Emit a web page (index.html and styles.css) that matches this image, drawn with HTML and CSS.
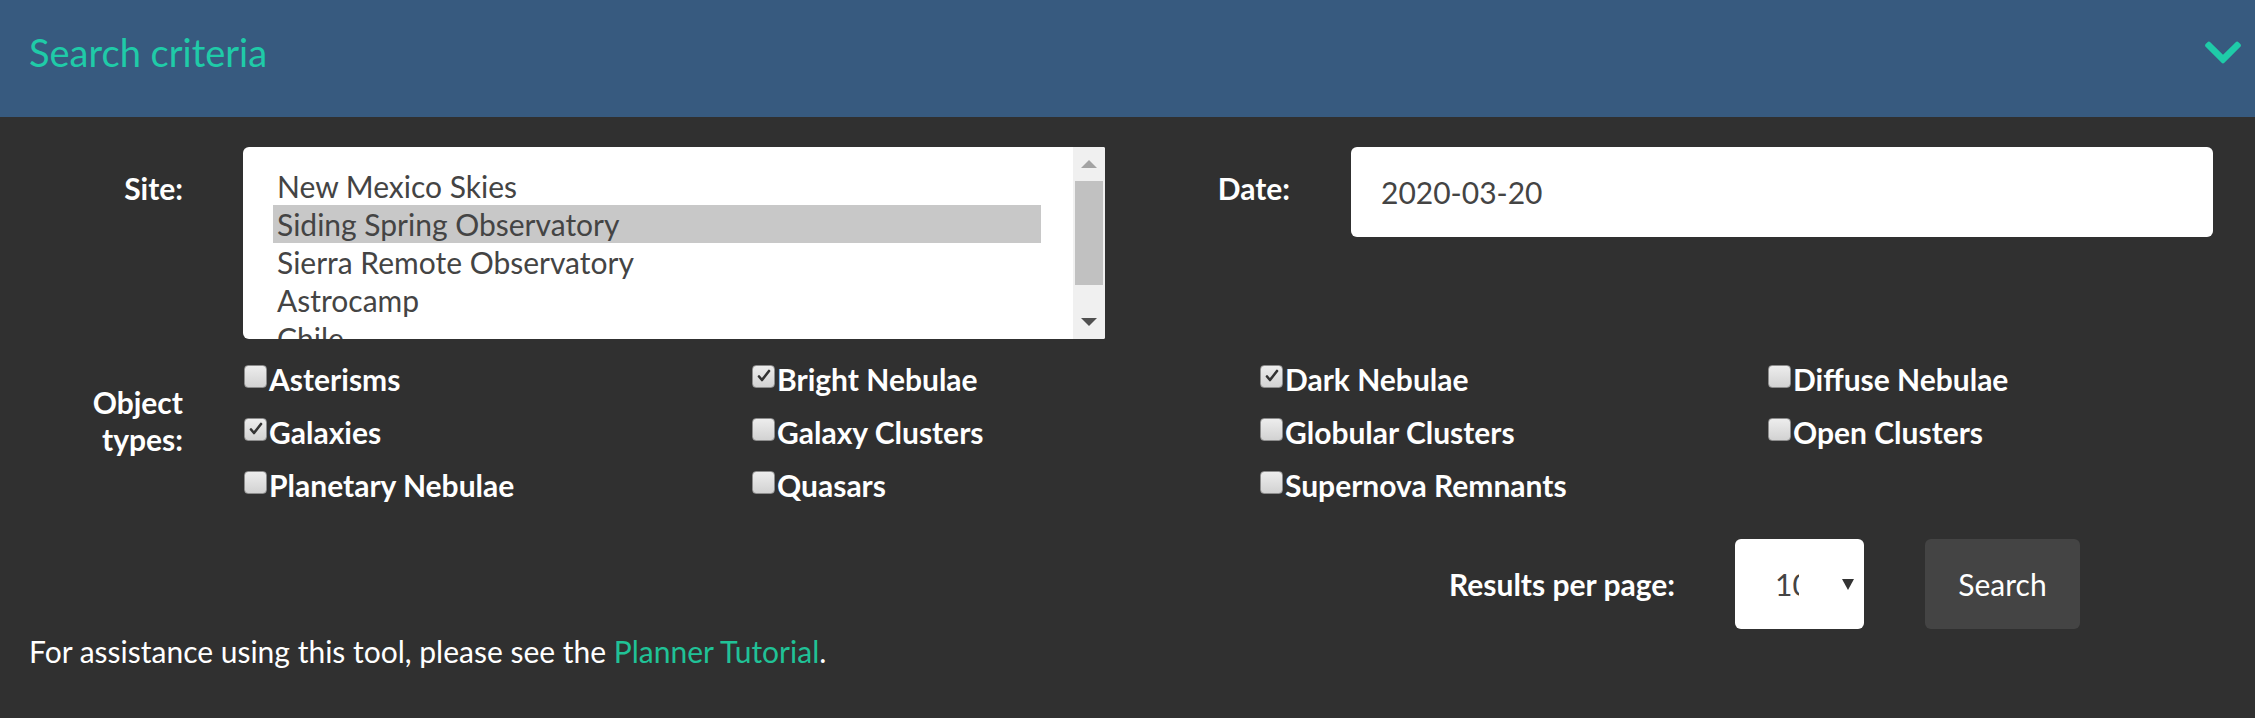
FILE: index.html
```html
<!DOCTYPE html>
<html lang="en">
<head>
<meta charset="utf-8">
<title>Search criteria</title>
<link rel="stylesheet" href="styles.css">
</head>
<body>
<section class="panel">
  <header class="panel-head">
    <h2 class="panel-title">Search criteria</h2>
    <svg class="chevron" viewBox="5 123 438 266" aria-hidden="true"><path d="M207.029 381.476L12.686 187.132c-9.373-9.373-9.373-24.569 0-33.941l22.667-22.667c9.357-9.357 24.522-9.375 33.901-.04L224 284.505l154.745-154.021c9.379-9.335 24.544-9.317 33.901.04l22.667 22.667c9.373 9.373 9.373 24.569 0 33.941L240.971 381.476c-9.373 9.372-24.569 9.372-33.942 0z"/></svg>
  </header>
  <div class="panel-body">
    <div class="row-fields">
      <div class="half">
        <label class="lbl">Site:</label>
        <div class="listbox">
          <ul class="options">
            <li class="opt">New Mexico Skies</li>
            <li class="opt opt-sel">Siding Spring Observatory</li>
            <li class="opt">Sierra Remote Observatory</li>
            <li class="opt">Astrocamp</li>
            <li class="opt">Chile</li>
          </ul>
          <div class="scrollbar">
            <div class="sb-btn"><svg class="sb-arrow sb-arrow-up" viewBox="0 0 16 8"><polygon points="8,0 16,8 0,8"/></svg></div>
            <div class="sb-thumb"></div>
            <div class="sb-track"></div>
            <div class="sb-btn"><svg class="sb-arrow sb-arrow-down" viewBox="0 0 16 8"><polygon points="0,0 16,0 8,8"/></svg></div>
          </div>
        </div>
      </div>
      <div class="half half-date">
        <label class="lbl lbl-date">Date:</label>
        <div class="date-input">2020-03-20</div>
      </div>
    </div>

    <div class="row-types">
      <div class="lbl lbl-types">Object<br>types:</div>
      <div class="types-grid">
        <label class="type"><span class="cb"></span>Asterisms</label>
        <label class="type"><span class="cb cb-on"><svg viewBox="0 0 16 16"><path d="M3 8.5l3 3.5 7-9"/></svg></span>Bright Nebulae</label>
        <label class="type"><span class="cb cb-on"><svg viewBox="0 0 16 16"><path d="M3 8.5l3 3.5 7-9"/></svg></span>Dark Nebulae</label>
        <label class="type"><span class="cb"></span>Diffuse Nebulae</label>
        <label class="type"><span class="cb cb-on"><svg viewBox="0 0 16 16"><path d="M3 8.5l3 3.5 7-9"/></svg></span>Galaxies</label>
        <label class="type"><span class="cb"></span>Galaxy Clusters</label>
        <label class="type"><span class="cb"></span>Globular Clusters</label>
        <label class="type"><span class="cb"></span>Open Clusters</label>
        <label class="type"><span class="cb"></span>Planetary Nebulae</label>
        <label class="type"><span class="cb"></span>Quasars</label>
        <label class="type"><span class="cb"></span>Supernova Remnants</label>
      </div>
    </div>

    <div class="row-actions">
      <span class="lbl-results">Results per page:</span>
      <div class="per-page">
        <span class="pp-value">10</span>
        <svg class="pp-arrow" viewBox="0 0 12 11"><polygon points="0,0 12,0 6,11"/></svg>
      </div>
      <button class="btn-search" type="button">Search</button>
    </div>

    <p class="help">For assistance using this tool, please see the <a class="help-link" href="#">Planner Tutorial</a>.</p>
  </div>
</section>
</body>
</html>
```

FILE: styles.css
```css
html, body {
  margin: 0;
  padding: 0;
}

body {
  background: #303030;
  color: #ffffff;
  font-family: Lato, "Open Sans", "Liberation Sans", sans-serif;
  width: 2255px;
  height: 718px;
  overflow: hidden;
}

.panel-head {
  box-sizing: border-box;
  height: 117px;
  background: #375a7f;
  display: flex;
  align-items: center;
  justify-content: space-between;
  padding: 0 14px 0 29px;
}

.panel-title {
  margin: 0;
  font-size: 38px;
  font-weight: 400;
  line-height: 48px;
  color: #1fcba8;
  position: relative;
  top: -7px;
}

.chevron {
  width: 36px;
  height: 23px;
  fill: #1fcba8;
  position: relative;
  top: -6px;
}

.panel-body {
  padding-top: 30px;
}

/* Site / Date row */
.row-fields {
  display: flex;
}

.half {
  display: flex;
  align-items: flex-start;
  flex-shrink: 0;
}

.lbl {
  box-sizing: border-box;
  flex-shrink: 0;
  width: 183px;
  margin-right: 60px;
  padding-top: 23px;
  text-align: right;
  font-size: 30px;
  font-weight: 700;
  line-height: 37px;
  color: #ffffff;
}

.lbl-date {
  width: 185px;
  margin-right: 61px;
}

.listbox {
  box-sizing: border-box;
  flex-shrink: 0;
  width: 862px;
  height: 192px;
  background: #ffffff;
  border-radius: 6px 2px 2px 6px;
  overflow: hidden;
  display: flex;
}

.options {
  list-style: none;
  margin: 0;
  padding: 20px 32px 0 30px;
  flex: 1;
}

.opt {
  padding-left: 4px;
  height: 38px;
  line-height: 38px;
  font-size: 30px;
  color: #444444;
  white-space: nowrap;
}

.opt-sel {
  background: #c8c8c8;
}

.scrollbar {
  width: 32px;
  background: #f0f0f0;
  display: flex;
  flex-direction: column;
}

.sb-btn {
  height: 34px;
  display: flex;
  align-items: center;
  justify-content: center;
}

.sb-arrow {
  width: 16px;
  height: 8px;
}

.sb-arrow-up {
  fill: #a3a3a3;
}

.sb-arrow-down {
  fill: #505050;
}

.sb-thumb {
  height: 104px;
  margin: 0 2px;
  background: #c1c1c1;
}

.sb-track {
  flex: 1;
}

.date-input {
  box-sizing: border-box;
  flex-shrink: 0;
  width: 862px;
  height: 90px;
  background: #ffffff;
  border-radius: 6px;
  padding-left: 30px;
  display: flex;
  align-items: center;
  font-size: 30px;
  color: #444444;
}

/* Object types */
.row-types {
  display: flex;
  align-items: flex-start;
  margin-top: 22px;
}

.lbl-types {
  padding-top: 23px;
}

.types-grid {
  flex-shrink: 0;
  display: grid;
  grid-template-columns: repeat(4, 508px);
  row-gap: 17px;
}

.type {
  display: flex;
  align-items: center;
  gap: 2px;
  font-size: 30px;
  font-weight: 700;
  line-height: 36px;
  color: #ffffff;
  white-space: nowrap;
}

.cb {
  box-sizing: border-box;
  flex-shrink: 0;
  width: 23px;
  height: 23px;
  margin-left: 1px;
  border: 1px solid #8c8c8c;
  border-radius: 4px;
  background: linear-gradient(#ededed, #d2d2d2);
  display: flex;
  align-items: center;
  justify-content: center;
  position: relative;
  top: -3px;
}

.cb svg {
  width: 16px;
  height: 16px;
  fill: none;
  stroke: #333333;
  stroke-width: 2.6;
  stroke-linecap: round;
  stroke-linejoin: round;
}

/* Actions */
.row-actions {
  display: flex;
  align-items: center;
  justify-content: flex-end;
  padding-right: 175px;
  margin-top: 36px;
}

.lbl-results {
  font-size: 30px;
  font-weight: 700;
  margin-right: 60px;
}

.per-page {
  box-sizing: border-box;
  width: 129px;
  height: 90px;
  background: #ffffff;
  border-radius: 6px;
  display: flex;
  align-items: center;
  padding-left: 40px;
}

.pp-value {
  width: 24px;
  overflow: hidden;
  white-space: nowrap;
  font-size: 30px;
  color: #444444;
}

.pp-arrow {
  width: 12px;
  height: 11px;
  margin-left: 43px;
  fill: #333333;
}

.btn-search {
  box-sizing: border-box;
  width: 155px;
  height: 90px;
  margin-left: 61px;
  border: none;
  border-radius: 6px;
  background: #444444;
  color: #ffffff;
  font-family: inherit;
  font-size: 30px;
  padding: 0;
}

.help {
  margin: 0;
  padding-left: 29px;
  font-size: 30px;
  line-height: 45px;
}

.help-link {
  color: #20c297;
  text-decoration: none;
}
```
